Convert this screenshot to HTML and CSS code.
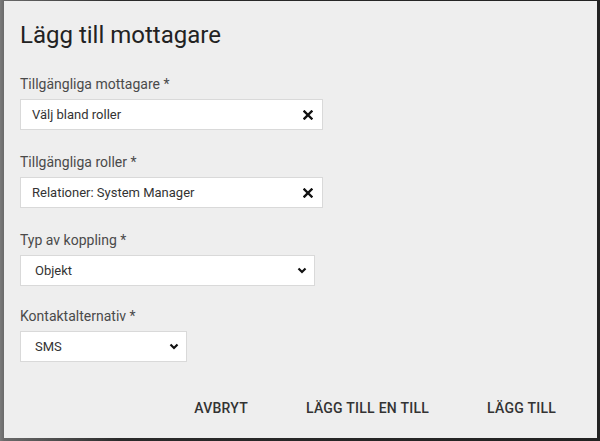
FILE: index.html
```html
<!DOCTYPE html>
<html lang="sv">
<head>
<meta charset="utf-8">
<title>Lägg till mottagare</title>
<link rel="stylesheet" href="styles.css">
</head>
<body>
<div class="backdrop">
  <div class="dialog">
    <h1 class="title">Lägg till mottagare</h1>

    <div class="field">
      <label class="label">Tillgängliga mottagare *</label>
      <div class="input input-wide">
        <span class="value">Välj bland roller</span>
        <svg class="clear" width="10" height="10" viewBox="0 0 10 10"><path d="M1.5 1.5 L8.5 8.5 M8.5 1.5 L1.5 8.5" stroke="#111" stroke-width="2.4" stroke-linecap="square"/></svg>
      </div>
    </div>

    <div class="field">
      <label class="label">Tillgängliga roller *</label>
      <div class="input input-wide">
        <span class="value">Relationer: System Manager</span>
        <svg class="clear" width="10" height="10" viewBox="0 0 10 10"><path d="M1.5 1.5 L8.5 8.5 M8.5 1.5 L1.5 8.5" stroke="#111" stroke-width="2.4" stroke-linecap="square"/></svg>
      </div>
    </div>

    <div class="field field-select">
      <label class="label">Typ av koppling *</label>
      <div class="input select select-mid">
        <span class="value">Objekt</span>
        <svg class="chev" width="10" height="7" viewBox="0 0 10 7"><path d="M1.5 1.5 L5 5 L8.5 1.5" fill="none" stroke="#111" stroke-width="2.2"/></svg>
      </div>
    </div>

    <div class="field field-last">
      <label class="label">Kontaktalternativ *</label>
      <div class="input select select-small">
        <span class="value">SMS</span>
        <svg class="chev" width="10" height="7" viewBox="0 0 10 7"><path d="M1.5 1.5 L5 5 L8.5 1.5" fill="none" stroke="#111" stroke-width="2.2"/></svg>
      </div>
    </div>

    <div class="actions">
      <button class="btn">AVBRYT</button>
      <button class="btn">LÄGG TILL EN TILL</button>
      <button class="btn">LÄGG TILL</button>
    </div>
  </div>
</div>
</body>
</html>
```

FILE: styles.css
```css
html, body {
  margin: 0;
  padding: 0;
  height: 441px;
  overflow: hidden;
}
body {
  background: linear-gradient(to right, #7a7a7a 0px, #6a6a6a 4px, #2a2a2a 120px, #222 100%);
  font-family: Roboto, "Liberation Sans", sans-serif;
}
.backdrop {
  padding: 1px 3px 3px 4px;
}
.dialog {
  box-sizing: border-box;
  width: 593px;
  height: 437px;
  background: #eeeeee;
  padding: 20px 16px 0 16px;
  display: flex;
  flex-direction: column;
}
.title {
  margin: 0 0 25px 0;
  font-size: 24px;
  line-height: 28px;
  font-weight: 400;
  color: #222;
}
.field {
  display: flex;
  flex-direction: column;
  margin-bottom: 22px;
}
.field-select {
  margin-bottom: 20px;
}
.field-last {
  margin-bottom: 0;
}
.label {
  font-size: 14px;
  line-height: 20px;
  color: #4a4a4a;
  margin-bottom: 5px;
}
.input {
  box-sizing: border-box;
  height: 31px;
  background: #fff;
  border: 1px solid #d9d9d9;
  display: flex;
  align-items: center;
  justify-content: space-between;
  padding: 0 9px 0 11px;
}
.input-wide {
  width: 303px;
}
.select {
  padding: 0 7px 0 14px;
}
.select-mid {
  width: 295px;
}
.select-small {
  width: 167px;
}
.value {
  font-size: 13px;
  color: #333;
}
.clear, .chev {
  display: block;
}
.actions {
  margin-top: 28px;
  display: flex;
  justify-content: flex-end;
  gap: 26px;
  padding-right: 9px;
}
.btn {
  background: none;
  border: none;
  height: 36px;
  padding: 0 16px;
  font-family: Roboto, "Liberation Sans", sans-serif;
  font-size: 14px;
  font-weight: 500;
  letter-spacing: 0.25px;
  color: #333;
  cursor: pointer;
}
```
